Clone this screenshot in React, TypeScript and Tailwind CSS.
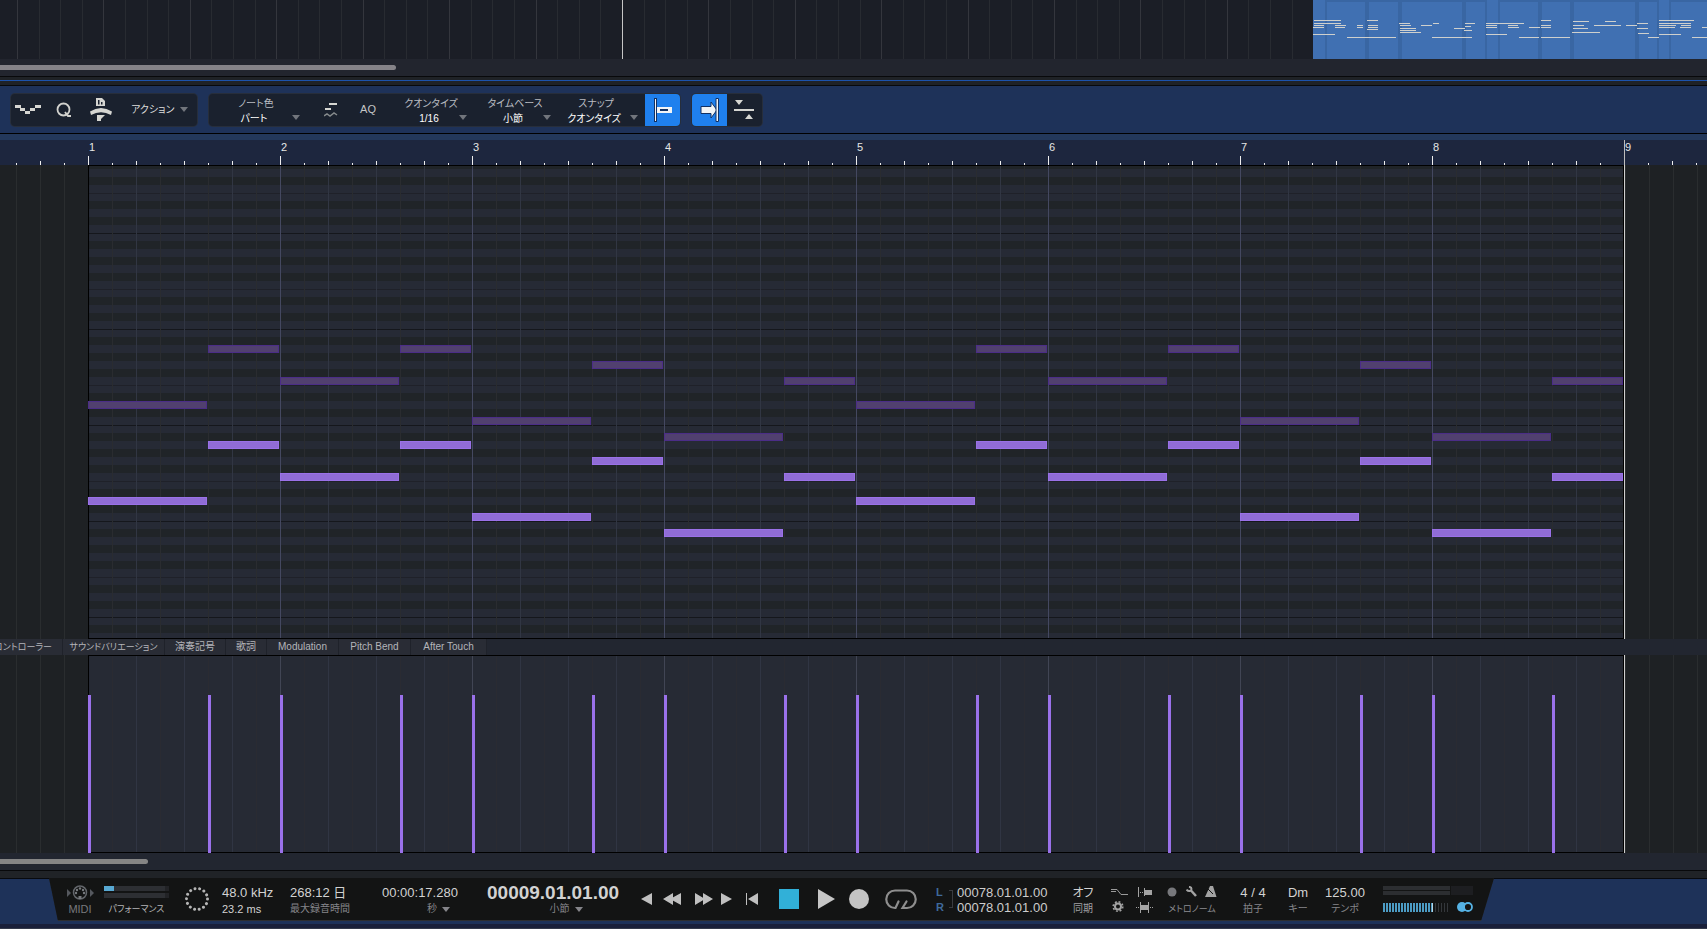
import { useState, type ReactNode } from "react";

const STEP = 24;
const BAR = 192;

// top edge of the long and the short note in each bar
const BARS = [
  { long: 331, short: 275 },
  { long: 307, short: 275 },
  { long: 347, short: 291 },
  { long: 363, short: 307 },
  { long: 331, short: 275 },
  { long: 307, short: 275 },
  { long: 347, short: 291 },
  { long: 363, short: 307 },
];

const NOTES = BARS.flatMap((bar, i) => [
  { x: i * BAR, width: STEP * 5 - 1, y: bar.long },
  { x: i * BAR + STEP * 5, width: STEP * 3 - 1, y: bar.short },
]);

// keys from top to bottom, starting on a half hidden G#
const OCTAVE = ["G#", "G", "F#", "F", "E", "D#", "D", "C#", "C", "B", "A#", "A"];
const ROWS = Array.from({ length: 60 }, (_, i) => OCTAVE[i % 12]);

const ARRANGE_LINES = Array.from({ length: 61 }, (_, i) => ({
  x: Math.round(17 + i * 21.605),
  strong: i % 4 === 0,
}));

// x, y, width
const MINI_NOTES = [
  [1, 20, 27], [1, 23, 27], [1, 25, 10], [0, 27, 11], [0, 34, 22], [22, 25, 11], [22, 27, 10],
  [44, 25, 6], [44, 27, 6], [34, 37, 49], [54, 20, 11], [55, 25, 10], [55, 27, 10], [54, 29, 11],
  [86, 23, 11], [87, 25, 11], [87, 28, 16], [87, 30, 16], [87, 32, 21], [108, 25, 11], [120, 23, 6],
  [119, 37, 40], [141, 28, 11], [152, 23, 10], [152, 26, 6], [151, 30, 8],
  [173, 23, 38], [173, 25, 11], [173, 27, 11], [173, 34, 21], [195, 25, 10], [195, 27, 11],
  [206, 37, 20], [216, 27, 11], [228, 20, 10], [228, 25, 10], [228, 27, 10], [228, 37, 29],
  [260, 21, 16], [260, 25, 11], [260, 28, 15], [259, 32, 28], [281, 25, 27], [292, 21, 11],
  [313, 25, 11], [324, 23, 11], [324, 28, 11], [325, 33, 11], [335, 37, 11],
  [346, 20, 35], [346, 23, 32], [346, 25, 17], [346, 27, 16], [346, 34, 22], [367, 27, 11],
  [368, 25, 10], [379, 37, 15], [389, 27, 5],
];

const CLIP_EDGES = [
  [12, 2], [52, 4], [85, 4], [149, 4], [172, 2], [185, 2], [225, 4], [257, 4], [322, 4], [344, 2], [356, 2],
];

function Arrow({ className = "" }: { className?: string }) {
  return (
    <svg width="8" height="5" viewBox="0 0 8 5" className={className}>
      <path d="M0 0h8L4 5z" fill="currentColor" />
    </svg>
  );
}

function Field({ id, label, value, width }: { id: string; label: string; value: string; width: string }) {
  return (
    <div className="flex items-end pt-[2px]">
      <div className={width}>
        <label htmlFor={id} className="block h-[15px] pl-1 text-center text-[10px] leading-[15px] text-[#b9bcc1]">
          {label}
        </label>
        <select
          id={id}
          defaultValue={value}
          className="block h-[15px] w-full appearance-none bg-transparent p-0 text-center text-[10px] leading-[15px] text-white"
        >
          <option>{value}</option>
        </select>
      </div>
      <Arrow className="mb-[6px] text-[#71757c]" />
    </div>
  );
}

function IconButton({ label, className = "", children }: { label: string; className?: string; children: ReactNode }) {
  return (
    <button type="button" aria-label={label} className={`flex shrink-0 items-center justify-center ${className}`}>
      {children}
    </button>
  );
}

function Stat({ className = "", top, sub }: { className?: string; top: ReactNode; sub: ReactNode }) {
  return (
    <div className={`shrink-0 leading-4 whitespace-nowrap ${className}`}>
      <div className="h-4 text-[13px] text-[#d2d2d2]">{top}</div>
      <div className="h-4 text-[10px] text-[#85858a]">{sub}</div>
    </div>
  );
}

function Arrange() {
  return (
    <section className="relative h-[59px] shrink-0 overflow-hidden bg-[#1b1e26]">
      {ARRANGE_LINES.map((line) => (
        <div
          key={line.x}
          className={`absolute inset-y-0 w-px ${line.strong ? "bg-[#34363d]" : "bg-[#282b31]"}`}
          style={{ left: line.x }}
        />
      ))}
      <div className="absolute inset-y-0 left-[622px] w-px bg-[#c6c6c6]" />
      <div className="absolute inset-y-0 right-0 left-[1313px] overflow-hidden bg-[#4070b2]">
        <svg width="394" height="59" viewBox="0 0 394 59" shapeRendering="crispEdges">
          {CLIP_EDGES.map(([x, w]) => (
            <rect key={x} x={x} y="0" width={w} height="59" fill="#3966a3" />
          ))}
          <path d="M12 1h160M186 1h159M357 1h37" stroke="#3966a3" strokeWidth="2" />
          {MINI_NOTES.map(([x, y, w]) => (
            <rect key={`${x}-${y}`} x={x} y={y} width={w} height="1" fill="#cfd0cd" />
          ))}
        </svg>
      </div>
    </section>
  );
}

function Toolbar() {
  const [autoScroll, setAutoScroll] = useState(true);

  return (
    <div className="flex h-[48px] shrink-0 items-center border-b border-black bg-[#1e3259] pl-[11px]">
      <div className="flex h-8 w-[186px] shrink-0 items-center rounded bg-[#1a212e] ring-1 ring-[#272e3b]">
        <IconButton label="ベロシティ" className="w-[34px]">
          <svg width="26" height="9" viewBox="0 0 26 9" shapeRendering="crispEdges" fill="#d6d6d2">
            <path d="M0 0h6v3H0zM5 3h5v3H5zM10 6h5v3h-5zM15 3h5v3h-5zM20 0h6v3h-6z" />
          </svg>
        </IconButton>
        <IconButton label="クオンタイズ" className="w-[38px]">
          <svg width="16" height="16" viewBox="0 0 16 16" fill="none" stroke="#d2d2ce" strokeWidth="1.8">
            <circle cx="7.5" cy="7.5" r="6" />
            <path d="M9 10l3 4h3" />
          </svg>
        </IconButton>
        <IconButton label="ヒューマナイズ" className="ml-[6px] w-6">
          <svg width="22" height="23" viewBox="0 0 22 23" fill="#d6d6d2">
            <path d="M6 0h6l3 3v5H6z" />
            <path d="M8 2h1.500v4.500H8zM11 4h1.500v2.500H11z" fill="#1a212e" />
            <path d="M0 13.500Q11 6.500 22 13.500L21 17Q11 11.500 1 17z" />
            <path d="M7 17h8l-4 4v2H7z" />
          </svg>
        </IconButton>
        <button type="button" className="ml-[18px] flex items-center gap-[6px] text-[10px] whitespace-nowrap text-[#dededc]">
          アクション
          <Arrow className="text-[#71757c]" />
        </button>
      </div>

      <div className="ml-3 flex h-8 shrink-0 items-center overflow-hidden rounded bg-[#1a212e] ring-1 ring-[#272e3b]">
        <div className="flex items-center pr-[7px] pl-[7px]">
          <Field id="note-color" label="ノート色" value="パート" width="w-[76px]" />
          <IconButton label="ノート表示" className="ml-[17px] w-7">
            <svg width="14" height="16" viewBox="0 0 14 16">
              <path d="M5 2h8M1 7h6" stroke="#d6d6d2" strokeWidth="2" />
              <path d="M0 14l3-2 3 2 4-3 3 2" fill="none" stroke="#858a8c" strokeWidth="1.500" />
            </svg>
          </IconButton>
          <button type="button" className="ml-2 w-[30px] text-center text-[11px] text-[#c4c6c6]">
            AQ
          </button>
          <div className="ml-4 flex">
            <Field id="quantize" label="クオンタイズ" value="1/16" width="w-[60px]" />
          </div>
          <div className="ml-4 flex">
            <Field id="timebase" label="タイムベース" value="小節" width="w-[60px]" />
          </div>
          <div className="ml-[7px] flex">
            <Field id="snap" label="スナップ" value="クオンタイズ" width="w-[72px]" />
          </div>
        </div>
        <IconButton label="スナップ" className="h-8 w-[35px] bg-[#1f80ee]">
          <svg width="20" height="24" viewBox="0 0 20 24" shapeRendering="crispEdges">
            <path d="M1 0h3v9h15v6H4v9H1z" fill="#123164" />
            <path d="M2 1h1v22H2zM4 9h15v6H4z" fill="#f2f4f6" />
            <path d="M7 11h8v2H7z" fill="#123164" />
          </svg>
        </IconButton>
      </div>

      <div className="ml-3 flex h-8 shrink-0 overflow-hidden rounded bg-[#1a212e] ring-1 ring-[#272e3b]">
        <button
          type="button"
          aria-label="オートスクロール"
          aria-pressed={autoScroll}
          onClick={() => setAutoScroll(!autoScroll)}
          className={`flex h-8 w-[35px] items-center justify-center ${autoScroll ? "bg-[#1f80ee]" : ""}`}
        >
          <svg width="20" height="24" viewBox="0 0 20 24">
            <path d="M1 8.500h10V4l6 8-6 8v-4.500H1z" fill="#f2f4f6" stroke="#123164" />
            <path d="M16 .500h2.500v23H16z" fill="#f2f4f6" stroke="#123164" />
          </svg>
        </button>
        <IconButton label="カーソル追従" className="h-8 w-[35px]">
          <svg width="21" height="20" viewBox="0 0 21 20" fill="#d6d6d2">
            <path d="M1 0h8L5 5zM0 9h20v2H0zM11 19h8l-4-5z" />
          </svg>
        </IconButton>
      </div>
    </div>
  );
}

function Ruler() {
  return (
    <div className="flex h-[31px] shrink-0 overflow-hidden border-t-[6px] border-[#23385b] bg-[#1d263e] [background-image:linear-gradient(90deg,#eee_1px,transparent_1px),linear-gradient(90deg,#eee_1px,transparent_1px),linear-gradient(90deg,#eee_1px,transparent_1px)] [background-position:88px_100%] [background-repeat:repeat-x] [background-size:192px_9px,48px_4px,24px_2px] pl-[88px]">
      {BARS.map((_, i) => (
        <div key={i} className="w-[192px] shrink-0 pl-px text-[11px] leading-[14px] text-[#e6e6e6]">
          {i + 1}
        </div>
      ))}
      <div className="-mt-[6px] flex-1 border-l border-[#bdbdbd] pt-[6px] text-[11px] leading-[14px] text-[#e6e6e6]">9</div>
    </div>
  );
}

function Margin({ className = "" }: { className?: string }) {
  return (
    <div
      className={`bg-[#1e2124] [background-image:linear-gradient(90deg,#2a2d2f_1px,transparent_1px)] [background-size:24px_100%] ${className}`}
    />
  );
}

function PianoRoll() {
  return (
    <section className="flex h-[474px] shrink-0 overflow-hidden">
      <Margin className="w-[88px] shrink-0 [background-position:16px_0]" />
      <div className="relative w-[1536px] shrink-0 overflow-hidden pt-px">
        {ROWS.map((key, i) => (
          <div
            key={i}
            className={`${i === 0 ? "h-[3px]" : "h-2"} ${key.includes("#") ? "bg-[#202428]" : "bg-[#262a35]"} ${
              key === "B" ? "border-t border-[#15171c]" : key === "E" ? "border-t border-[#1f2129]" : ""
            }`}
          />
        ))}
        <div className="absolute inset-0 bg-[linear-gradient(90deg,#444860_1px,transparent_1px),linear-gradient(90deg,#313643_1px,transparent_1px),linear-gradient(90deg,#2a2c30_1px,transparent_1px)] [background-size:192px_100%,48px_100%,24px_100%] shadow-[inset_0_0_0_1px_#000]" />
        {NOTES.map((note) => (
          <div key={`ghost-${note.x}`}>
            <div
              className="absolute h-2 border border-[#4b2d87] bg-[#51406f]"
              style={{ left: note.x, top: note.y + 1 - 96, width: note.width }}
            />
            <div
              className="absolute h-2 border border-[#9a71e8] bg-[#906cd6]"
              style={{ left: note.x, top: note.y + 1, width: note.width }}
            />
          </div>
        ))}
      </div>
      <Margin className="flex-1 border-l border-[#d0d0d0]" />
    </section>
  );
}

function ControllerTabs() {
  const tab = "h-4 shrink-0 overflow-hidden border-r border-[#1f222a] bg-[#292c35] text-center whitespace-nowrap";

  return (
    <nav className="flex h-4 shrink-0 bg-[#222630] text-[10px] leading-4 text-[#b4b5ba]">
      <button type="button" className={`${tab} flex w-[63px] justify-end pr-[10px] text-[9px]`}>トコントローラー</button>
      <button type="button" className={`${tab} w-[102px] text-[9px]`}>サウンドバリエーション</button>
      <button type="button" className={`${tab} w-[61px]`}>演奏記号</button>
      <button type="button" className={`${tab} w-[41px]`}>歌詞</button>
      <button type="button" className={`${tab} w-[72px]`}>Modulation</button>
      <button type="button" className={`${tab} w-[72px]`}>Pitch Bend</button>
      <button type="button" className={`${tab} w-[76px]`}>After Touch</button>
    </nav>
  );
}

function VelocityLane() {
  return (
    <section className="flex min-h-[198px] flex-1 overflow-hidden">
      <Margin className="w-[88px] shrink-0 [background-position:16px_0]" />
      <div className="relative w-[1536px] shrink-0 bg-[#262a34]">
        <div className="absolute inset-0 bg-[linear-gradient(90deg,#414554_1px,transparent_1px),linear-gradient(90deg,#303543_1px,transparent_1px),linear-gradient(90deg,#2a2b32_1px,transparent_1px)] [background-size:192px_100%,48px_100%,24px_100%] shadow-[inset_0_0_0_1px_#000]" />
        {NOTES.map((note) => (
          <div key={note.x} className="absolute bottom-0 h-[158px] w-[3px] bg-[#9a71ea]" style={{ left: note.x }} />
        ))}
      </div>
      <Margin className="flex-1 border-l border-[#d0d0d0]" />
    </section>
  );
}

function Transport() {
  return (
    <footer className="shrink-0 border-b border-[#343a4a] bg-[#1a203a]">
      <div className="h-[46px] border-t border-[#080a0e] bg-[#1e3259]">
        <div className="-mt-px ml-[49px] w-[1445px] bg-[#2d2e30] pb-px [clip-path:polygon(0_0,100%_0,calc(100%_-_13px)_100%,9px_100%)]">
          <div className="flex h-[42px] items-start bg-[#131414] pt-[7px] pl-[13px]">
            <div className="w-9 shrink-0 text-center">
              <svg width="28" height="16" viewBox="0 0 28 16" fill="#55585e" className="mx-auto">
                <path d="M1 4v8l4-4zM24 4v8l4-4z" />
                <circle cx="14" cy="7.500" r="6.500" fill="none" stroke="#63666b" strokeWidth="1.500" />
                <g fill="#76797d">
                  <circle cx="10" cy="8" r="1.200" /><circle cx="18" cy="8" r="1.200" />
                  <circle cx="11" cy="5" r="1.200" /><circle cx="17" cy="5" r="1.200" />
                  <circle cx="14" cy="3.500" r="1.200" /><path d="M12.500 11h3v3h-3z" />
                </g>
              </svg>
              <div className="text-[11px] leading-4 text-[#77787c]">MIDI</div>
            </div>

            <div className="ml-[6px] w-[65px] shrink-0 text-center text-[9px] leading-4 whitespace-nowrap text-[#b4b5b7]">
              <div className="flex h-4 flex-col gap-[2px] pt-px">
                <div className="h-[5px] border-r-4 border-[#222326] bg-[#2d2f33]">
                  <div className="h-full w-[10px] bg-[#58a9d3]" />
                </div>
                <div className="h-[5px] border-r-4 border-[#222326] bg-[#2d2f33]" />
              </div>
              パフォーマンス
            </div>

            <svg width="24" height="24" viewBox="0 0 24 24" className="mt-[2px] ml-4 shrink-0" fill="none">
              <circle cx="12" cy="12" r="10.500" stroke="#b5b5b5" strokeWidth="3" strokeLinecap="round" strokeDasharray="0.01 4.702" />
            </svg>

            <Stat
              className="ml-[13px] w-[58px]"
              top="48.0 kHz"
              sub={<span className="text-[11px] text-[#d2d2d2]">23.2 ms</span>}
            />
            <Stat className="ml-[10px] w-[62px]" top="268:12 日" sub="最大録音時間" />
            <Stat
              className="ml-[30px] w-[76px]"
              top="00:00:17.280"
              sub={<span className="flex items-center justify-end gap-[5px] pr-2">秒<Arrow /></span>}
            />
            <Stat
              className="ml-[29px] w-[134px]"
              top={<span className="text-[19px] font-bold">00009.01.01.00</span>}
              sub={<span className="flex items-center justify-center gap-[5px] pl-6">小節<Arrow /></span>}
            />

            <div className="ml-5 flex h-[28px] shrink-0 items-center">
              <IconButton label="前へ" className="w-[11px]">
                <svg width="11" height="12" viewBox="0 0 11 12" fill="#c0c0c0"><path d="M11 0v12L0 6z" /></svg>
              </IconButton>
              <IconButton label="巻き戻し" className="ml-[11px] w-[18px]">
                <svg width="18" height="12" viewBox="0 0 18 12" fill="#c0c0c0"><path d="M10 0v12L0 6zM18 0v12L7 6z" /></svg>
              </IconButton>
              <IconButton label="早送り" className="ml-[14px] w-[18px]">
                <svg width="18" height="12" viewBox="0 0 18 12" fill="#c0c0c0"><path d="M0 0v12l10-6zM8 0v12l10-6z" /></svg>
              </IconButton>
              <IconButton label="次へ" className="ml-2 w-[11px]">
                <svg width="11" height="12" viewBox="0 0 11 12" fill="#c0c0c0"><path d="M0 0v12l11-6z" /></svg>
              </IconButton>
              <IconButton label="先頭へ" className="ml-[14px] w-3">
                <svg width="12" height="12" viewBox="0 0 12 12" fill="#c0c0c0"><path d="M0 0h1v12H0zM12 0v12L2 6z" /></svg>
              </IconButton>
              <IconButton label="停止" className="ml-[21px] size-5 bg-[#31b0d8]">{null}</IconButton>
              <IconButton label="再生" className="ml-[19px] w-[17px]">
                <svg width="17" height="20" viewBox="0 0 17 20" fill="#c6c6c6"><path d="M0 0v20l17-10z" /></svg>
              </IconButton>
              <IconButton label="録音" className="ml-[14px] size-5 rounded-full bg-[#c3c3c3]">{null}</IconButton>
              <IconButton label="ループ" className="ml-4 w-8">
                <svg width="32" height="21" viewBox="0 0 32 21" fill="none" stroke="#8e8e8e" strokeWidth="2.200" strokeLinecap="round">
                  <path d="M13.500 12.500l-3 6.500H10A8.700 8.700 0 0 1 10 1.500h12A8.700 8.700 0 0 1 22 19h-4.500l4-6.500" />
                </svg>
              </IconButton>
            </div>

            <div className="ml-[19px] w-[9px] shrink-0 text-[11px] leading-[15px] font-bold text-[#3f6a9c]">
              <div>L</div>
              <div>R</div>
            </div>
            <div className="mt-[5px] ml-1 h-[18px] w-1 shrink-0 border border-l-0 border-[#3a3c40]" />
            <div className="ml-1 w-[90px] shrink-0 text-[13px] leading-[15px] text-[#cdcdcd]">
              <div>00078.01.01.00</div>
              <div>00078.01.01.00</div>
            </div>

            <Stat className="ml-[22px] w-7 text-center" top={<span className="text-[12px]">オフ</span>} sub={<span className="text-[#a0a0a3]">同期</span>} />

            <div className="ml-[14px] grid w-[44px] shrink-0 grid-cols-2 items-center gap-x-2">
              <svg width="17" height="14" viewBox="0 0 17 14" fill="none" stroke="#9a9a9a">
                <path d="M0 4.500h6M1 9.500h0M6 4.500l4 5h7M0 6.500h5" strokeWidth="1" />
              </svg>
              <svg width="17" height="14" viewBox="0 0 17 14" fill="#a3a3a3">
                <path d="M1 2h1v10H1zM3 7h1v1H3zM5 7h1v1H5zM7 3h1v8H7zM8 5h7v5H8z" />
              </svg>
              <svg width="14" height="14" viewBox="0 0 14 14" className="mt-px" fill="none">
                <circle cx="7" cy="6.500" r="3" stroke="#a3a3a3" strokeWidth="2" />
                <circle cx="7" cy="6.500" r="4.800" stroke="#a3a3a3" strokeWidth="1.600" strokeDasharray="1.900 1.870" />
              </svg>
              <svg width="18" height="14" viewBox="0 0 18 14" fill="#a3a3a3" className="-ml-px">
                <path d="M0 7h1v1H0zM2 7h1v1H2zM4 2h1v11H4zM12 2h1v11h-1zM5 5h7v5H5zM14 7h1v1h-1zM16 7h1v1h-1z" />
              </svg>
            </div>

            <div className="ml-3 w-[50px] shrink-0 text-center text-[9px] leading-4 whitespace-nowrap text-[#8c8c91]">
              <div className="flex h-4 items-center justify-between pb-[3px]">
                <svg width="10" height="10" viewBox="0 0 10 10"><circle cx="5" cy="5" r="4.500" fill="#77787c" /></svg>
                <svg width="11" height="11" viewBox="0 0 11 11" fill="none" stroke="#a3a3a3">
                  <path d="M.5 3.500c2 2.500 5 1.500 5-.5C5.500 1.500 4.500 1 3 .8" strokeWidth="2" />
                  <path d="M5 4.500l5 5.500" strokeWidth="2.500" />
                </svg>
                <svg width="12" height="11" viewBox="0 0 12 11">
                  <path d="M5 0h3l3.500 11H0z" fill="#a3a3a3" />
                  <path d="M1 1l7 7" stroke="#131414" strokeWidth="1" />
                </svg>
              </div>
              メトロノーム
            </div>

            <Stat className="ml-[18px] w-9 text-center" top="4 / 4" sub="拍子" />
            <Stat className="ml-[10px] w-[34px] text-center" top="Dm" sub="キー" />
            <Stat className="ml-2 w-11 text-center" top="125.00" sub="テンポ" />

            <div className="mt-px ml-4 w-[90px] shrink-0">
              <div className="flex gap-px">
                <div className="flex w-[67px] flex-col gap-px">
                  <div className="h-1 bg-[#2c2e31]" />
                  <div className="h-1 bg-[#2c2e31]" />
                </div>
                <div className="h-[9px] flex-1 bg-[#1d1e21]" />
              </div>
              <div className="mt-[7px] flex items-center justify-between">
                <div className="flex h-[9px] w-[67px]">
                  <div className="w-[49px] bg-[repeating-linear-gradient(90deg,#4c9cc5_0_2px,#131414_2px_3px)]" />
                  <div className="w-px bg-[#b9d5e4]" />
                  <div className="flex-1 bg-[repeating-linear-gradient(90deg,#131414_0_2px,#34373b_2px_3px)]" />
                </div>
                <svg width="16" height="10" viewBox="0 0 16 10" fill="none">
                  <circle cx="5" cy="5" r="5" fill="#55b2e4" />
                  <circle cx="11" cy="5" r="4" fill="#131414" stroke="#55b2e4" strokeWidth="1.800" />
                </svg>
              </div>
            </div>
          </div>
        </div>
      </div>
      <div className="h-1" />
    </footer>
  );
}

export default function App() {
  return (
    <main className="flex min-h-screen flex-col overflow-hidden bg-[#1e2124] font-['Liberation_Sans','Noto_Sans_CJK_JP',sans-serif] [font-feature-settings:'palt']">
      <Arrange />
      <div className="h-[17px] shrink-0 bg-[#22252e] pt-[6px]">
        <div className="h-[5px] w-[396px] rounded-r-full bg-[#858388]" />
      </div>
      <div className="h-[10px] shrink-0 border-y border-[#08090b] bg-[#1f2226] pt-[3px]">
        <div className="h-px bg-[#1c53ad]" />
      </div>
      <Toolbar />
      <Ruler />
      <PianoRoll />
      <ControllerTabs />
      <VelocityLane />
      <div className="h-[17px] shrink-0 bg-[#222630] pt-[6px]">
        <div className="h-[5px] w-[148px] rounded-r-full bg-[#858585]" />
      </div>
      <div className="h-2 shrink-0 border-t border-[#08090b] bg-[#202327]" />
      <Transport />
    </main>
  );
}
